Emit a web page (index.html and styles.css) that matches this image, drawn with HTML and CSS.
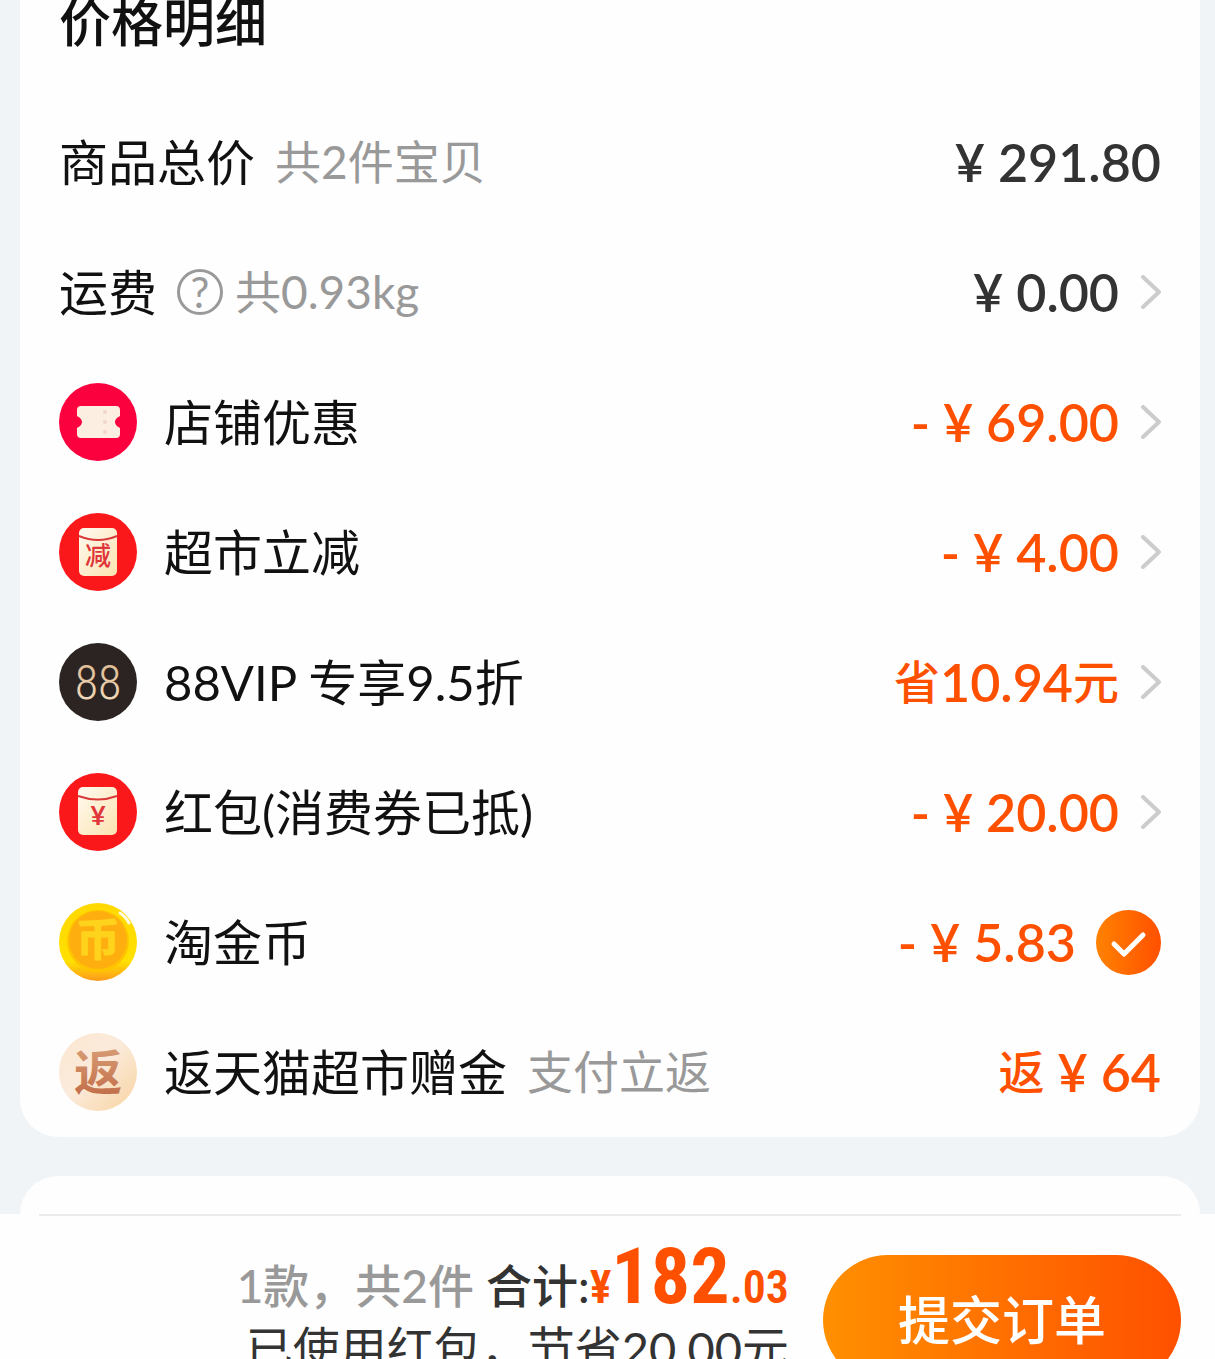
FILE: index.html
```html
<!DOCTYPE html>
<html lang="zh-CN">
<head>
<meta charset="utf-8">
<meta name="viewport" content="width=device-width, initial-scale=1">
<title>确认订单</title>
<link rel="stylesheet" href="styles.css">
</head>
<body>
<svg class="defs" width="0" height="0" aria-hidden="true">
  <defs>
    <linearGradient id="coinRim" x1="0" y1="0" x2="0" y2="1"><stop offset="0" stop-color="#ffd800"/><stop offset=".75" stop-color="#ffe000"/><stop offset="1" stop-color="#ff9a1c"/></linearGradient>
    <linearGradient id="cream" x1="0" y1="0" x2="1" y2="1"><stop offset="0" stop-color="#fbe6cf"/><stop offset=".45" stop-color="#fbebdc"/><stop offset="1" stop-color="#f8d3a0"/></linearGradient>
    <linearGradient id="paper" x1="0" y1="0" x2="1" y2="1"><stop offset="0" stop-color="#fffaf0"/><stop offset="1" stop-color="#fbe3b0"/></linearGradient>
    <linearGradient id="brown" x1="0" y1="0" x2="0" y2="1"><stop offset="0" stop-color="#d9a078"/><stop offset="1" stop-color="#c06a45"/></linearGradient>
    <linearGradient id="gold" x1="0" y1="0" x2="0" y2="1"><stop offset="0" stop-color="#d9b48c"/><stop offset="1" stop-color="#f6e3c4"/></linearGradient>
    <symbol id="chevron" viewBox="0 0 20 34"><path d="M2 2 18 17 2 32" fill="none" stroke="#ccc" stroke-width="4" stroke-linecap="round" stroke-linejoin="round"/></symbol>
  </defs>
</svg>
<main class="page">
  <section class="card">
    <h1 class="title">价格明细</h1>
    <ul class="rows">
      <li class="row">
        <span class="label">商品总价</span><span class="note">共2件宝贝</span>
        <span class="amount dark">¥ 291.80</span>
      </li>
      <li class="row">
        <span class="label">运费</span><button class="help" type="button" aria-label="运费说明">?</button><span class="note near">共0.93kg</span>
        <a class="amount dark" href="#freight">¥ 0.00<svg class="chevron"><use href="#chevron"/></svg></a>
      </li>
      <li class="row">
        <svg class="icon" viewBox="0 0 78 78"><circle cx="39" cy="39" r="39" fill="#fb023f"/><path d="M22 23h35a4 4 0 0 1 4 4v6c-2 1-5 3-5 6s3 5 5 6v6a4 4 0 0 1-4 4H22a4 4 0 0 1-4-4v-6c2-1 5-3 5-6s-3-5-5-6v-6a4 4 0 0 1 4-4z" fill="#fdeee2"/><g fill="#f3d5cb"><circle cx="46" cy="29" r="2"/><circle cx="46" cy="39" r="2"/><circle cx="46" cy="49" r="2"/></g></svg>
        <span class="label">店铺优惠</span>
        <a class="amount" href="#shop">- ¥ 69.00<svg class="chevron"><use href="#chevron"/></svg></a>
      </li>
      <li class="row">
        <svg class="icon" viewBox="0 0 78 78"><circle cx="39" cy="39" r="39" fill="#fb181b"/><rect x="20" y="15" width="38" height="48" rx="5" fill="url(#paper)"/><path d="M20 23q19 8 38 0" fill="none" stroke="#d83a3a" stroke-width="2"/><text x="39" y="52" class="glyph-sale">减</text></svg>
        <span class="label">超市立减</span>
        <a class="amount" href="#market">- ¥ 4.00<svg class="chevron"><use href="#chevron"/></svg></a>
      </li>
      <li class="row">
        <svg class="icon" viewBox="0 0 78 78"><circle cx="39" cy="39" r="39" fill="#2c2422"/><text x="39" y="56" class="glyph-vip">88</text></svg>
        <span class="label">88VIP 专享9.5折</span>
        <a class="amount" href="#vip"><span class="word">省</span>10.94<span class="word">元</span><svg class="chevron"><use href="#chevron"/></svg></a>
      </li>
      <li class="row">
        <svg class="icon" viewBox="0 0 78 78"><circle cx="39" cy="39" r="39" fill="#fb181b"/><rect x="19" y="14" width="39" height="48" rx="5" fill="url(#paper)"/><path d="M19 23q20 7 39 0" fill="none" stroke="#d83a3a" stroke-width="2"/><text x="39" y="52" class="glyph-yuan">¥</text></svg>
        <span class="label">红包(消费券已抵)</span>
        <a class="amount" href="#redpacket">- ¥ 20.00<svg class="chevron"><use href="#chevron"/></svg></a>
      </li>
      <li class="row">
        <svg class="icon" viewBox="0 0 78 78"><circle cx="39" cy="39" r="39" fill="url(#coinRim)"/><circle cx="39" cy="38" r="31" fill="#ffc400"/><circle cx="39" cy="37" r="29" fill="#ffae10"/><path d="M61 10q6 4 9 10" fill="none" stroke="#fffbe0" stroke-width="3" stroke-linecap="round"/><text x="39" y="53" class="glyph-coin">币</text></svg>
        <label class="label" for="coin">淘金币</label>
        <span class="amount">- ¥ 5.83<span class="tick"><input id="coin" type="checkbox" checked><svg viewBox="0 0 65 65"><path d="M18 34 28 44 47 25" fill="none" stroke="#fff" stroke-width="5" stroke-linecap="round" stroke-linejoin="round"/></svg></span></span>
      </li>
      <li class="row">
        <svg class="icon" viewBox="0 0 78 78"><circle cx="39" cy="39" r="39" fill="url(#cream)"/><text x="39" y="57" class="glyph-back">返</text></svg>
        <span class="label">返天猫超市赠金</span><span class="note">支付立返</span>
        <span class="amount"><span class="word">返</span> ¥ 64</span>
      </li>
    </ul>
  </section>
  <section class="card next"></section>
</main>
<footer class="bar">
  <div class="checkout">
    <div class="summary">
      <p class="total"><span class="count">1款，共2件</span><span class="sum">合计:</span><strong class="price"><small>¥</small>182<small>.03</small></strong></p>
      <p class="saved">已使用红包，节省20.00元</p>
    </div>
    <button class="submit" type="button">提交订单</button>
  </div>
</footer>
</body>
</html>
```

FILE: styles.css
```css
* { box-sizing: border-box; }

body {
  margin: 0;
  height: 100vh;
  overflow: hidden;
  background: #f0f4f7;
  color: #111;
  font-family: Lato, "Noto Sans CJK SC", sans-serif;
}

.defs { display: block; }

.page { padding: 0 15px 0 20px; }

.card {
  padding: 0 39px;
  background: #fefefe;
  border-radius: 0 0 38px 38px;
}

.card.next {
  height: 38px;
  margin-top: 39px;
  border-radius: 38px 38px 0 0;
}

.title {
  margin: 0;
  height: 97px;
  font-size: 52px;
  line-height: 44px;
  font-weight: 500;
}

.rows { margin: 0; padding: 0; list-style: none; }

.row {
  display: flex;
  align-items: center;
  height: 130px;
  line-height: 60px;
}

.icon {
  flex: none;
  width: 78px;
  height: 78px;
  margin-right: 27px;
}

.label { font-size: 49px; }

.note {
  margin-left: 20px;
  color: #999;
  font-size: 46px;
}

.note.near { margin-left: 12px; }

.help {
  width: 46px;
  height: 46px;
  margin-left: 20px;
  padding: 0;
  border: 3px solid #999;
  border-radius: 50%;
  background: none;
  color: #999;
  font: 42px/40px Lato, sans-serif;
}

.amount {
  display: flex;
  align-items: center;
  margin-left: auto;
  color: #ff5000;
  font-size: 52px;
  font-weight: 600;
  text-decoration: none;
  white-space: pre;
}

.amount.dark { color: #333; }

.word { font-size: 46px; font-weight: 500; }

.chevron {
  width: 20px;
  height: 34px;
  margin-left: 22px;
}

.tick {
  display: grid;
  width: 65px;
  height: 65px;
  margin-left: 20px;
}

.tick input,
.tick svg { grid-area: 1 / 1; width: 65px; height: 65px; }

.tick input {
  appearance: none;
  margin: 0;
  border-radius: 50%;
  background: linear-gradient(90deg, #ff8200, #ff5000);
}

.tick svg { pointer-events: none; z-index: 1; }

.glyph-sale, .glyph-yuan, .glyph-vip, .glyph-coin, .glyph-back {
  text-anchor: middle;
  font-family: Lato, "Noto Sans CJK SC", sans-serif;
}
.glyph-sale { font-size: 26px; font-weight: 500; fill: #e0353a; }
.glyph-yuan { font-size: 26px; font-weight: 700; fill: #e0353a; }
.glyph-vip { font-family: "Roboto Condensed", Lato, sans-serif; font-size: 48px; font-weight: 300; fill: url(#gold); }
.glyph-coin { font-size: 44px; font-weight: 700; fill: #ffd21c; stroke: #ffd21c; stroke-width: 1px; stroke-linejoin: round; }
.glyph-back { font-size: 48px; font-weight: 700; fill: url(#brown); }

.bar {
  padding: 0 34px 40px 39px;
  background: #fefefe;
}

.checkout {
  display: flex;
  justify-content: flex-end;
  align-items: flex-start;
  gap: 34px;
  border-top: 2px solid #ebebeb;
}

.summary { padding-top: 24px; text-align: right; white-space: nowrap; }

.total {
  display: flex;
  justify-content: flex-end;
  align-items: baseline;
  margin: 0;
  height: 78px;
  line-height: 74px;
  font-size: 46px;
  font-weight: 500;
}

.count { margin-right: 12px; color: #999; }

.sum { color: #333; }

.price {
  color: #ff5000;
  font-family: "Roboto Condensed", "Liberation Sans", sans-serif;
  font-size: 78px;
  font-weight: 700;
}

.price small { font-size: 46px; font-weight: 600; }

.saved {
  margin: 0;
  color: #333;
  font-size: 47px;
  line-height: 60px;
}

.submit {
  flex: none;
  width: 358px;
  height: 130px;
  margin-top: 39px;
  padding: 0;
  border: 0;
  border-radius: 65px;
  background: linear-gradient(90deg, #ff9000, #ff5000);
  color: #fff;
  font: 500 52px/60px Lato, "Noto Sans CJK SC", sans-serif;
}
```
